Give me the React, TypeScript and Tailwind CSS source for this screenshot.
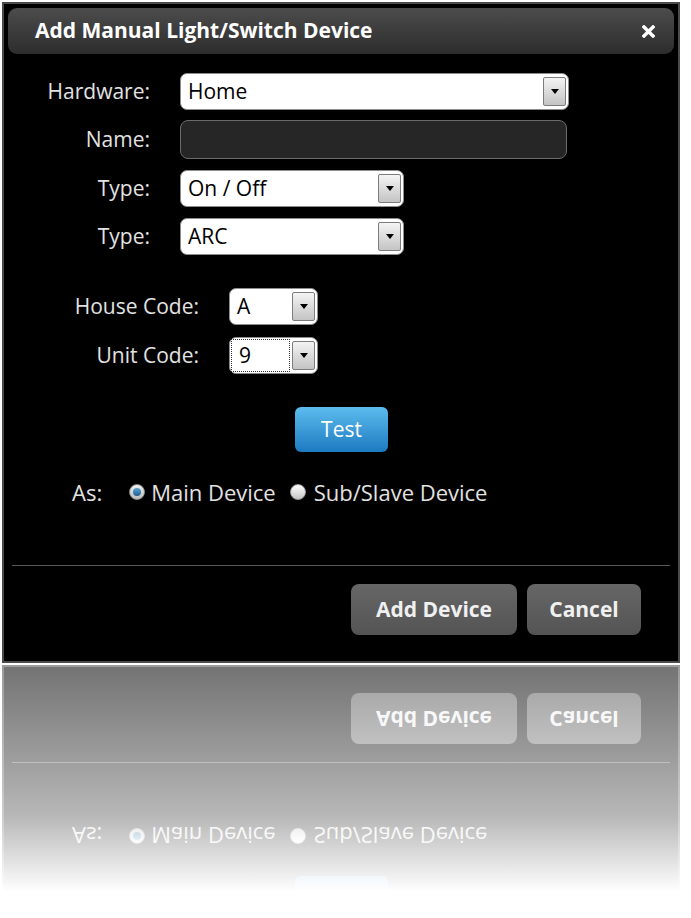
import React from 'react';

const font = { fontFamily: '"Open Sans", "Noto Sans", sans-serif' };

const Arrow = () => (
  <div className="flex h-[29px] w-[23px] items-center justify-center rounded-[2px] border border-[#7c7c7c] bg-gradient-to-b from-[#f4f4f4] to-[#c4c4c4]">
    <div className="h-0 w-0 border-l-[4px] border-r-[4px] border-t-[5px] border-l-transparent border-r-transparent border-t-black" />
  </div>
);

const Select = ({ value, width, focused = false }: { value: string; width: string; focused?: boolean }) => (
  <div className={`flex h-[37px] items-center rounded-[7px] border border-[#8d8d8d] bg-white pr-[2px] ${width}`}>
    <div className={`flex h-[33px] flex-1 items-center pl-[7px] ${focused ? 'ml-[1px] mr-[2px] border border-dotted border-[#333]' : ''}`}>
      <span className="text-[21px] leading-none text-black">{value}</span>
    </div>
    <Arrow />
  </div>
);

// lower part of the dialog, shared with the reflection
const DialogBottom = ({ showTestLabel = true }: { showTestLabel?: boolean }) => (
  <div className="flex flex-col pb-[26px]">
    <div className="flex justify-center pl-[1px]">
      <button className="h-[45px] w-[93px] rounded-[6px] bg-gradient-to-b from-[#5cbcee] to-[#1c7ac0] text-[21px] text-white">
        {showTestLabel ? 'Test' : ''}
      </button>
    </div>

    <div className="mt-[27px] flex h-[26px] items-center text-[22px] text-[#e2e2e2]">
      <span className="ml-[64px]">As:</span>
      <div className="ml-[27px] flex h-[16px] w-[16px] items-center justify-center rounded-full border border-[#8a8a8a] bg-gradient-to-b from-[#f0f0f0] to-[#bdbdbd]">
        <div className="h-[8px] w-[8px] rounded-full bg-gradient-to-b from-[#5aa6d6] to-[#1f5f8e]" />
      </div>
      <span className="ml-[6px]">Main Device</span>
      <div className="ml-[14px] h-[16px] w-[16px] rounded-full border border-[#9a9a9a] bg-gradient-to-b from-[#ffffff] to-[#c4c4c4]" />
      <span className="ml-[8px]">Sub/Slave Device</span>
    </div>

    <div className="mx-[4px] mt-[60px] h-px bg-[#575757]" />

    <div className="mt-[18px] flex justify-end gap-[10px] pr-[33px]">
      <button className="h-[51px] w-[166px] rounded-[8px] bg-gradient-to-b from-[#666666] to-[#545454] text-[21px] font-bold text-[#f0f0f0]">
        Add Device
      </button>
      <button className="h-[51px] w-[114px] rounded-[8px] bg-gradient-to-b from-[#666666] to-[#545454] text-[21px] font-bold text-[#f0f0f0]">
        Cancel
      </button>
    </div>
  </div>
);

const Dialog = () => (
  <div style={font} className="flex h-[661px] w-[678px] flex-col border-2 border-[#4b4b4b] bg-black px-[4px] pt-[4px]">
    {/* Title */}
    <div className="flex h-[46px] items-center justify-between rounded-[9px] bg-gradient-to-b from-[#4c4c4c] to-[#2d2d2d] pl-[27px] pr-[19px]">
      <span className="text-[21px] font-bold text-white">Add Manual Light/Switch Device</span>
      <svg width="13" height="13" viewBox="0 0 13 13">
        <path d="M2 2 L11 11 M11 2 L2 11" stroke="white" strokeWidth="3.4" strokeLinecap="square" />
      </svg>
    </div>

    {/* Form */}
    <div className="mt-[19px] flex items-center">
      <div className="w-[142px] text-right text-[21px] text-[#e2e2e2]">Hardware:</div>
      <div className="ml-[30px]"><Select value="Home" width="w-[389px]" /></div>
    </div>
    <div className="mt-[10px] flex items-center">
      <div className="w-[142px] text-right text-[21px] text-[#e2e2e2]">Name:</div>
      <div className="ml-[30px] h-[39px] w-[387px] rounded-[8px] border border-[#6a6a6a] bg-[#262626]" />
    </div>
    <div className="mt-[11px] flex items-center">
      <div className="w-[142px] text-right text-[21px] text-[#e2e2e2]">Type:</div>
      <div className="ml-[30px]"><Select value="On / Off" width="w-[224px]" /></div>
    </div>
    <div className="mt-[11px] flex items-center">
      <div className="w-[142px] text-right text-[21px] text-[#e2e2e2]">Type:</div>
      <div className="ml-[30px]"><Select value="ARC" width="w-[224px]" /></div>
    </div>

    <div className="mt-[33px] flex items-center">
      <div className="w-[191px] text-right text-[21px] text-[#e2e2e2]">House Code:</div>
      <div className="ml-[30px]"><Select value="A" width="w-[89px]" /></div>
    </div>
    <div className="mt-[12px] flex items-center">
      <div className="w-[191px] text-right text-[21px] text-[#e2e2e2]">Unit Code:</div>
      <div className="ml-[30px]"><Select value="9" width="w-[89px]" focused /></div>
    </div>

    <div className="mt-auto">
      <DialogBottom />
    </div>
  </div>
);

export default function App() {
  return (
    <div className="min-h-[918px] w-[691px] bg-white pl-[2px] pt-[2px]">
      <Dialog />
      {/* Reflection */}
      <div className="relative mt-[2px] h-[252px] w-[678px] overflow-hidden">
        <div
          style={font}
          className="flex h-[256px] -scale-y-100 flex-col justify-end border-2 border-t-0 border-[#4b4b4b] bg-black px-[4px]"
        >
          <DialogBottom showTestLabel={false} />
        </div>
        <div className="absolute inset-0 bg-gradient-to-b from-white/45 via-white/72 via-60% to-white to-90%" />
      </div>
    </div>
  );
}
